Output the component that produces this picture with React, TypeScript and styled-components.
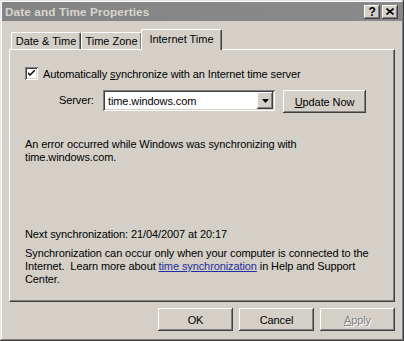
import React from 'react';
import styled, { createGlobalStyle, css } from 'styled-components';

const face = '#d4d0c8';

const raised = css`
  box-shadow: inset -1px -1px #404040, inset 1px 1px #ffffff, inset -2px -2px #808080,
    inset 2px 2px ${face};
`;

const sunken = css`
  box-shadow: inset 1px 1px #808080, inset -1px -1px #ffffff, inset 2px 2px #404040,
    inset -2px -2px ${face};
`;

const GlobalStyle = createGlobalStyle`
  html, body {
    margin: 0;
    padding: 0;
    background: ${face};
  }
  body {
    font-family: "Liberation Sans", Arial, sans-serif;
    font-size: 11px;
    letter-spacing: -0.1px;
    color: #000;
  }
`;

const StyledWindow = styled.div`
  width: 404px;
  height: 341px;
  box-sizing: border-box;
  padding: 2px;
  display: flex;
  flex-direction: column;
  background: ${face};
  box-shadow: inset -1px -1px #404040, inset 1px 1px #e4e4e4, inset -2px -2px #808080,
    inset 2px 2px #ffffff;
`;

const StyledTitleBar = styled.div`
  height: 19px;
  display: flex;
  align-items: center;
  padding: 0 4px 0 3px;
  background: linear-gradient(to right, #848484, #8a8a8a);
`;

const StyledTitle = styled.div`
  flex: 1;
  font-weight: bold;
  font-size: 11.8px;
  letter-spacing: 0.1px;
  color: #d8d5cf;
`;

const StyledTitleButtons = styled.div`
  display: flex;
  gap: 2px;
`;

const StyledTitleButton = styled.div`
  width: 16px;
  height: 14px;
  box-sizing: border-box;
  display: flex;
  align-items: center;
  justify-content: center;
  background: ${face};
  font-weight: bold;
  font-size: 12px;
  ${raised};
`;

const StyledBody = styled.div`
  flex: 1;
  display: flex;
  flex-direction: column;
  padding: 8px 7px 8px;
`;

const StyledTabStrip = styled.div`
  height: 20px;
  display: flex;
  align-items: flex-end;
  padding-left: 2px;
`;

const StyledTab = styled.div<{ width: number; active?: boolean }>`
  width: ${({ width }) => width}px;
  height: ${({ active }) => (active ? 21 : 17)}px;
  box-sizing: border-box;
  display: flex;
  justify-content: center;
  padding-top: ${({ active }) => (active ? 3 : 2)}px;
  letter-spacing: 0;
  background: ${face};
  border-top: 1px solid #ffffff;
  border-left: 1px solid #ffffff;
  border-right: 1px solid #404040;
  border-radius: 2px 2px 0 0;
  box-shadow: inset -1px 0 #808080;
  ${({ active }) =>
    active &&
    css`
      position: relative;
      z-index: 1;
      margin-left: -1px;
      margin-bottom: -1px;
    `}
`;

const StyledPanel = styled.div`
  flex: 1;
  box-sizing: border-box;
  padding: 17px 15px 0;
  border-top: 1px solid #ffffff;
  border-left: 1px solid #ffffff;
  border-right: 1px solid #404040;
  border-bottom: 1px solid #404040;
  box-shadow: inset -1px -1px #808080;
`;

const StyledCheckRow = styled.label`
  height: 13px;
  display: flex;
  align-items: center;
  gap: 5px;
`;

const StyledCheckbox = styled.span`
  width: 13px;
  height: 13px;
  box-sizing: border-box;
  display: flex;
  align-items: center;
  justify-content: center;
  background: #ffffff;
  ${sunken};
`;

const StyledServerRow = styled.div`
  margin-top: 10px;
  display: flex;
  align-items: flex-start;
  padding-left: 34px;
`;

const StyledFieldLabel = styled.span`
  width: 44px;
  line-height: 21px;
`;

const StyledCombo = styled.div`
  width: 172px;
  height: 21px;
  box-sizing: border-box;
  padding: 2px;
  display: flex;
  align-items: center;
  background: #ffffff;
  ${sunken};
`;

const StyledComboText = styled.span`
  flex: 1;
  padding-left: 3px;
`;

const StyledDropButton = styled.span`
  width: 16px;
  height: 17px;
  box-sizing: border-box;
  display: flex;
  align-items: center;
  justify-content: center;
  background: ${face};
  ${raised};
`;

const StyledButton = styled.div<{ width?: number; disabled?: boolean }>`
  width: ${({ width }) => width || 75}px;
  height: 23px;
  box-sizing: border-box;
  display: flex;
  align-items: center;
  justify-content: center;
  background: ${face};
  ${raised};
  ${({ disabled }) =>
    disabled &&
    css`
      color: #808080;
      text-shadow: 1px 1px #ffffff;
    `}
`;

const StyledUpdateButton = styled(StyledButton)`
  margin-left: 8px;
`;

const StyledText = styled.p<{ top: number }>`
  margin: ${({ top }) => top}px 0 0;
  line-height: 13px;
`;

const StyledLink = styled.a`
  color: #1f2f9e;
  text-decoration: underline;
`;

const StyledFooter = styled.div`
  margin-top: 6px;
  display: flex;
  justify-content: flex-end;
  gap: 6px;
`;

const CloseGlyph = () => (
  <svg width="8" height="7" viewBox="0 0 8 7">
    <path d="M0.5 0.5 L7.5 6.5 M7.5 0.5 L0.5 6.5" stroke="#000" strokeWidth="1.6" />
  </svg>
);

const CheckGlyph = () => (
  <svg width="7" height="7" viewBox="0 0 7 7">
    <path d="M0 2 L2 4 L7 -1 L7 1 L2 6 L0 4 Z" fill="#000" />
  </svg>
);

const ArrowGlyph = () => (
  <svg width="7" height="4" viewBox="0 0 7 4">
    <path d="M0 0 H7 L3.5 4 Z" fill="#000" />
  </svg>
);

const App: React.FC = () => (
  <>
    <GlobalStyle />
    <StyledWindow>
      <StyledTitleBar>
        <StyledTitle>Date and Time Properties</StyledTitle>
        <StyledTitleButtons>
          <StyledTitleButton>?</StyledTitleButton>
          <StyledTitleButton>
            <CloseGlyph />
          </StyledTitleButton>
        </StyledTitleButtons>
      </StyledTitleBar>
      <StyledBody>
        <StyledTabStrip>
          <StyledTab width={70}>Date &amp; Time</StyledTab>
          <StyledTab width={61}>Time Zone</StyledTab>
          <StyledTab width={81} active>
            Internet Time
          </StyledTab>
        </StyledTabStrip>
        <StyledPanel>
          <StyledCheckRow>
            <StyledCheckbox>
              <CheckGlyph />
            </StyledCheckbox>
            <span>
              Automatically <u>s</u>ynchronize with an Internet time server
            </span>
          </StyledCheckRow>
          <StyledServerRow>
            <StyledFieldLabel>Server:</StyledFieldLabel>
            <StyledCombo>
              <StyledComboText>time.windows.com</StyledComboText>
              <StyledDropButton>
                <ArrowGlyph />
              </StyledDropButton>
            </StyledCombo>
            <StyledUpdateButton width={83}>
              <span>
                <u>U</u>pdate Now
              </span>
            </StyledUpdateButton>
          </StyledServerRow>
          <StyledText top={25}>
            An error occurred while Windows was synchronizing with
            <br />
            time.windows.com.
          </StyledText>
          <StyledText top={64}>Next synchronization: 21/04/2007 at 20:17</StyledText>
          <StyledText top={6}>
            Synchronization can occur only when your computer is connected to the
            <br />
            Internet.&nbsp; Learn more about <StyledLink>time synchronization</StyledLink> in Help
            and Support
            <br />
            Center.
          </StyledText>
        </StyledPanel>
        <StyledFooter>
          <StyledButton>OK</StyledButton>
          <StyledButton>Cancel</StyledButton>
          <StyledButton disabled>
            <span>
              <u>A</u>pply
            </span>
          </StyledButton>
        </StyledFooter>
      </StyledBody>
    </StyledWindow>
  </>
);

export default App;
